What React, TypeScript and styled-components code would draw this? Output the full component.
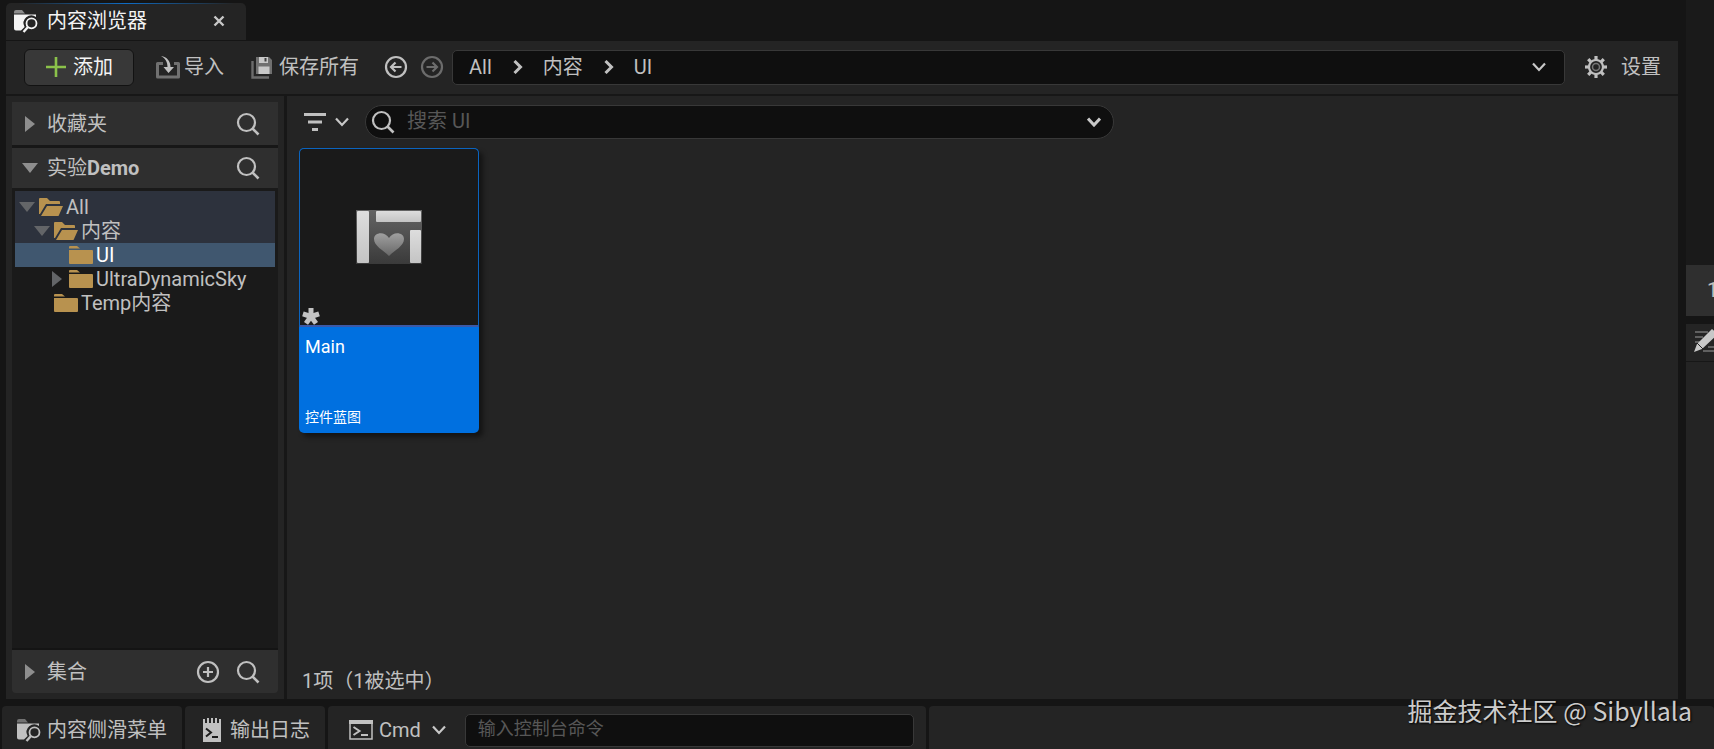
import React from "react";
import styled, { createGlobalStyle } from "styled-components";

const GlobalStyle = createGlobalStyle`
  *, *::before, *::after { box-sizing: border-box; }
  html, body { margin: 0; padding: 0; background: #151515; }
  body, button, input {
    font-family: Roboto, "Noto Sans CJK SC", sans-serif;
    font-size: 20px;
    line-height: 24px;
    color: #c0c0c0;
  }
  button { margin: 0; padding: 0; border: 0; background: none; cursor: pointer; text-align: left; }
  ul { list-style: none; margin: 0; padding: 0; }
  svg { display: block; flex: none; }
`;

const Editor = styled.div`
  display: flex;
  flex-direction: column;
  min-height: 100vh;
`;

const Workspace = styled.div`
  flex: 1;
  display: flex;
  gap: 8px;
  padding-left: 6px;
`;

const Browser = styled.main`
  flex: 1;
  min-width: 0;
  display: flex;
  flex-direction: column;
`;

const TabStrip = styled.header`
  display: flex;
  height: 41px;
  padding: 3px 0 1px;
`;

const Tab = styled.div`
  position: relative;
  display: flex;
  align-items: center;
  width: 240px;
  padding: 0 21px 2px 7px;
  border-radius: 5px 5px 0 0;
  background: #242424;
  color: #f4f4f4;
  overflow: hidden;

  &::before {
    content: "";
    position: absolute;
    top: 0;
    left: 0;
    right: 0;
    height: 1px;
    background: linear-gradient(90deg, transparent 5%, #0f6cc4 50%, transparent 95%);
  }
`;

const TabTitle = styled.h1`
  flex: 1;
  margin: 0 0 0 9px;
  font-size: 20px;
  line-height: 24px;
  font-weight: 400;
`;

const IconButton = styled.button`
  display: flex;
  align-items: center;
  justify-content: center;
  flex: none;
`;

const Toolbar = styled.div`
  display: flex;
  align-items: center;
  height: 53px;
  padding: 0 17px 1px 18px;
  background: #242424;
`;

const AddButton = styled.button`
  display: flex;
  align-items: center;
  gap: 7px;
  height: 37px;
  width: 110px;
  padding: 0 0 1px 21px;
  border: 1px solid #121212;
  border-radius: 6px;
  background: #383838;
  color: #f4f4f4;
`;

const ToolButton = styled.button<{ $gap: number; $before: number }>`
  display: flex;
  align-items: center;
  flex: none;
  gap: ${(p) => p.$gap}px;
  margin-left: ${(p) => p.$before}px;
`;

const History = styled.div`
  display: flex;
  gap: 12px;
  margin: 0 8px 0 25px;
`;

const Breadcrumbs = styled.nav`
  flex: 1;
  display: flex;
  align-items: center;
  height: 35px;
  padding: 0 18px 0 16px;
  border: 1px solid #383838;
  border-radius: 5px;
  background: #0f0f0f;
`;

const Crumb = styled.button`
  padding-right: 21px;
  & + svg { margin-right: 20px; }
`;

const Spacer = styled.div`
  flex: 1;
`;

const Columns = styled.div`
  flex: 1;
  display: flex;
  gap: 3px;
  padding-top: 2px;
  background: #171717;
`;

const Sidebar = styled.aside`
  display: flex;
  flex-direction: column;
  flex: none;
  width: 278px;
  padding: 6px;
  background: #242424;
`;

const SectionHeader = styled.div<{ $height: number; $bottom?: boolean }>`
  display: flex;
  align-items: center;
  height: ${(p) => p.$height}px;
  padding: 0 18px 0 10px;
  border-radius: ${(p) => (p.$bottom ? "0 0 4px 4px" : "0")};
  background: #2f2f2f;
`;

const SectionToggle = styled.button`
  flex: 1;
  display: flex;
  align-items: center;
  & > svg { margin-right: 9px; }
`;

const SectionActions = styled.div`
  display: flex;
  gap: 16px;
`;

const Divider = styled.div`
  height: 3px;
  background: #171717;
`;

const TreeArea = styled.div`
  flex: 1;
  padding: 3px;
  border-bottom: 2px solid #141414;
  background: #1a1a1a;
`;

const Ancestors = styled.ul`
  padding-top: 4px;
  background: #2d323d;
`;

const TreeRow = styled.button<{ $level: number; $selected?: boolean }>`
  display: flex;
  align-items: center;
  width: 100%;
  height: 24px;
  padding-left: ${(p) => 4 + p.$level * 15}px;
  background: ${(p) => (p.$selected ? "#40576f" : "transparent")};
  color: ${(p) => (p.$selected ? "#ffffff" : "#c0c0c0")};
  white-space: nowrap;
`;

const TreeArrow = styled.span`
  display: flex;
  justify-content: center;
  width: 16px;
  margin-right: 4px;
`;

const TreeLabel = styled.span`
  margin-left: 3px;
`;

const Content = styled.section`
  flex: 1;
  display: flex;
  flex-direction: column;
  min-width: 0;
  padding: 9px 12px 6px;
  background: #242424;
`;

const FilterBar = styled.div`
  display: flex;
  align-items: center;
  padding-left: 5px;
`;

const FilterButton = styled.button`
  display: flex;
  align-items: center;
  gap: 9px;
  margin-right: 16px;
`;

const SearchBox = styled.label`
  display: flex;
  align-items: center;
  flex: 0 1 749px;
  height: 34px;
  padding: 0 12px 0 5px;
  border: 1px solid #383838;
  border-radius: 17px;
  background: #0f0f0f;
`;

const TextField = styled.input`
  flex: 1;
  min-width: 0;
  padding: 0;
  border: 0;
  outline: 0;
  background: transparent;
  &::placeholder { color: #575757; opacity: 1; }
`;

const SearchField = styled(TextField)`
  padding: 0 0 3px 12px;
`;

const Assets = styled.div`
  flex: 1;
  display: flex;
  align-items: flex-start;
  padding-top: 9px;
`;

const AssetCard = styled.button`
  display: flex;
  flex-direction: column;
  width: 180px;
  border-radius: 5px;
  background: #0070e0;
  color: #ffffff;
  overflow: hidden;
  box-shadow: 4px 4px 5px rgba(0, 0, 0, 0.45);
`;

const Thumbnail = styled.span`
  position: relative;
  display: flex;
  align-items: center;
  justify-content: center;
  width: 100%;
  height: 179px;
  border: 1px solid #0b64bf;
  border-bottom: 2px solid #3b59a8;
  border-radius: 5px 5px 0 0;
  background: #1a1a1a;
`;

const UnsavedMark = styled.span`
  position: absolute;
  left: 2px;
  bottom: 0;
`;

const AssetText = styled.span`
  display: flex;
  flex-direction: column;
  justify-content: space-between;
  height: 106px;
  padding: 8px 6px 6px;
  font-size: 18px;
`;

const AssetType = styled.span`
  font-size: 14px;
  line-height: 20px;
`;

const Summary = styled.p`
  margin: 0;
  padding-left: 3px;
`;

const SidePeek = styled.aside`
  flex: none;
  display: flex;
  flex-direction: column;
  width: 28px;
  overflow: hidden;
`;

const PeekTop = styled.div`
  height: 265px;
  background: #1a1a1a;
`;

const PeekTab = styled.div`
  height: 51px;
  margin-bottom: 8px;
  padding: 13px 0 0 21px;
  background: #2f2f2f;
`;

const PeekTools = styled.div`
  height: 38px;
  padding: 5px 0 0 8px;
  border-bottom: 1px solid #171717;
  background: #242424;
`;

const PeekBody = styled.div`
  flex: 1;
  background: #242424;
`;

const StatusBar = styled.footer`
  display: flex;
  height: 50px;
  gap: 3px;
  padding: 7px 0 0 2px;
  background: #151515;
`;

const StatusGroup = styled.div<{ $width?: number; $pad: number }>`
  display: flex;
  align-items: center;
  flex: ${(p) => (p.$width ? `none` : "1")};
  width: ${(p) => (p.$width ? `${p.$width}px` : "auto")};
  padding: 5px 0 0 ${(p) => p.$pad}px;
  border-radius: 4px 4px 0 0;
  background: #242424;
`;

const StatusButton = styled.button<{ $gap: number }>`
  display: flex;
  align-items: center;
  gap: ${(p) => p.$gap}px;
  white-space: nowrap;
`;

const ConsoleField = styled(TextField)`
  flex: none;
  width: 449px;
  height: 33px;
  margin-left: 19px;
  padding: 0 12px 3px;
  border: 1px solid #383838;
  border-radius: 5px;
  background: #0f0f0f;
  font-size: 18px;
`;

const Watermark = styled.div`
  position: absolute;
  right: 22px;
  bottom: 21px;
  font-family: "Noto Sans CJK SC", sans-serif;
  font-size: 25px;
  line-height: 36px;
  color: #cccccc;
  text-shadow: 1px 1px 2px #000000;
`;

const BrowserIcon = () => (
  <svg width="25" height="24" viewBox="0 0 25 24" fill="none">
    <path d="M1 3a2 2 0 0 1 2-2h6l3 3.500H1z" fill="currentColor" opacity=".5" />
    <path d="M1 5.500h22v2.400A7.800 7.800 0 0 0 11.600 18L8 21.500H3a2 2 0 0 1-2-2z" fill="currentColor" />
    <circle cx="18.500" cy="14.300" r="5" stroke="currentColor" strokeWidth="1.800" />
    <path d="M15 18l-4.500 5" stroke="currentColor" strokeWidth="2.400" />
  </svg>
);

const CloseIcon = () => (
  <svg width="12" height="12" viewBox="0 0 12 12" fill="none">
    <path d="M1.500 1.500l9 9M10.500 1.500l-9 9" stroke="#c8c8c8" strokeWidth="2.400" />
  </svg>
);

const PlusIcon = () => (
  <svg width="20" height="20" viewBox="0 0 20 20" fill="none">
    <path d="M10 0v20M0 10h20" stroke="#8bc24a" strokeWidth="2.600" />
  </svg>
);

const ImportIcon = () => (
  <svg width="24" height="24" viewBox="0 0 24 24" fill="none">
    <path d="M7 8.500H1.500v13.500h21V8.500H18" stroke="#707070" strokeWidth="3" strokeLinejoin="round" />
    <path d="M5 1c6 1 9.500 5 9.500 11H18l-5.500 6L7.500 12h4C11.500 7 9.500 3.500 5 1z" fill="#c0c0c0" />
  </svg>
);

const SaveIcon = () => (
  <svg width="22" height="23" viewBox="0 0 22 23" fill="none">
    <path d="M1.500 5v16.500H18" stroke="#6c6c6c" strokeWidth="2.400" />
    <path d="M5 1h13l3 3v14H5z" fill="#707070" />
    <path d="M8 1h9v6H8zM7.500 10.500h11V18h-11z" fill="#c8c8c8" />
    <path d="M13.500 2h2v3.500h-2z" fill="#404040" />
  </svg>
);

const HistoryIcon = ({ forward }: { forward?: boolean }) => (
  <svg width="24" height="24" viewBox="0 0 24 24" fill="none" stroke={forward ? "#6c6c6c" : "#c0c0c0"} strokeWidth="2.200">
    <circle cx="12" cy="12" r="10" />
    {forward ? <path d="M6.500 12h10M12.500 7.500L17 12l-4.500 4.500" /> : <path d="M17.500 12h-10M11.500 7.500L7 12l4.500 4.500" />}
  </svg>
);

const CrumbChevron = () => (
  <svg width="10" height="14" viewBox="0 0 10 14" fill="none">
    <path d="M1.500 1l6 6-6 6" stroke="#c0c0c0" strokeWidth="3" />
  </svg>
);

const DownIcon = ({ bold }: { bold?: boolean }) => (
  <svg width="14" height="10" viewBox="0 0 14 10" fill="none">
    <path d="M1 1.500l6 6.500 6-6.500" stroke="#c8c8c8" strokeWidth={bold ? 3 : 2.2} />
  </svg>
);

const GearIcon = () => (
  <svg width="24" height="24" viewBox="0 0 24 24" fill="none" stroke="#c0c0c0">
    {[0, 45, 90, 135, 180, 225, 270, 315].map((angle) => (
      <path key={angle} d="M12 1v4" strokeWidth="3.200" transform={`rotate(${angle} 12 12)`} />
    ))}
    <circle cx="12" cy="12" r="7" strokeWidth="2.200" />
    <circle cx="12" cy="12" r="3.500" stroke="#777777" strokeWidth="1.500" />
  </svg>
);

const SearchIcon = () => (
  <svg width="24" height="24" viewBox="0 0 24 24" fill="none" stroke="#c0c0c0" strokeWidth="2.200">
    <circle cx="10.500" cy="10.500" r="8.500" />
    <path d="M16.500 16.500l6 6" strokeWidth="2.600" />
  </svg>
);

const AddCircleIcon = () => (
  <svg width="24" height="24" viewBox="0 0 24 24" fill="none" stroke="#c0c0c0" strokeWidth="2.200">
    <circle cx="12" cy="12" r="10" />
    <path d="M12 7v10M7 12h10" />
  </svg>
);

const ArrowIcon = ({ open, color = "#8e8e8e" }: { open?: boolean; color?: string }) =>
  open ? (
    <svg width="16" height="10" viewBox="0 0 16 10"><path d="M0 0h16L8 10z" fill={color} /></svg>
  ) : (
    <svg width="16" height="16" viewBox="0 0 16 16"><path d="M3 0v16l10-8z" fill={color} /></svg>
  );

const FolderIcon = ({ open }: { open?: boolean }) => (
  <svg width="24" height="20" viewBox="0 0 24 20" fill="#b8924f">
    {open ? (
      <>
        <path d="M0 2a1 1 0 0 1 1-1h7l3 3h9a1 1 0 0 1 1 1v2H7L1 17H0z" />
        <path d="M8 9h16l-4 9a1 1 0 0 1-1 1H2z" />
      </>
    ) : (
      <>
        <path d="M0 2a1 1 0 0 1 1-1h7l3 2.500H0z" />
        <path d="M0 5h23a1 1 0 0 1 1 1v12a1 1 0 0 1-1 1H1a1 1 0 0 1-1-1z" />
      </>
    )}
  </svg>
);

const FilterIcon = () => (
  <svg width="22" height="18" viewBox="0 0 22 18" stroke="#c0c0c0" strokeWidth="3">
    <path d="M0 1.500h22M4 9h14M8 16.500h6" />
  </svg>
);

const WidgetIcon = () => (
  <svg width="66" height="54" viewBox="0 0 66 54">
    <defs>
      <linearGradient id="heart" x1="0" y1="0" x2="0" y2="1">
        <stop offset="0" stopColor="#a0a0a0" />
        <stop offset="1" stopColor="#686868" />
      </linearGradient>
      <linearGradient id="board" x1="0" y1="0" x2="0" y2="1">
        <stop offset="0" stopColor="#646464" />
        <stop offset="1" stopColor="#3a3a3a" />
      </linearGradient>
      <linearGradient id="panel" x1="0" y1="0" x2="0" y2="1">
        <stop offset="0" stopColor="#dddddd" />
        <stop offset="1" stopColor="#c4c4c4" />
      </linearGradient>
    </defs>
    <rect width="66" height="54" fill="url(#board)" />
    <g fill="url(#panel)">
      <rect x="1" y="1" width="12" height="52" rx="1" />
      <rect x="20" y="1" width="45" height="11" rx="1" />
      <rect x="54" y="20" width="11" height="33" rx="1" />
    </g>
    <path d="M33 46C27 40 18 36 18 29c0-7 11-8 15-1 4-7 15-6 15 1 0 7-9 11-15 17z" fill="url(#heart)" />
  </svg>
);

const AsteriskIcon = () => (
  <svg width="18" height="18" viewBox="0 0 18 18" stroke="#c4c4c4" strokeWidth="5" strokeLinejoin="round">
    {[0, 72, 144, 216, 288].map((angle) => (
      <path key={angle} d="M9 9.500V1" transform={`rotate(${angle} 9 9.500)`} />
    ))}
  </svg>
);

const LogIcon = () => (
  <svg width="18" height="24" viewBox="0 0 18 24" fill="none">
    <path d="M0 1h2v4h2V0h2v5h2V0h2v5h2V0h2v5h2V1h2v23H0z" fill="#c0c0c0" />
    <path d="M3 10.500l5 4-5 4M9 19h6" stroke="#1c1c1c" strokeWidth="2" />
  </svg>
);

const TerminalIcon = () => (
  <svg width="24" height="20" viewBox="0 0 24 20" fill="none" stroke="#c0c0c0">
    <path d="M1 2v17h22V2" strokeWidth="1.500" />
    <path d="M0 2h24" strokeWidth="4" />
    <path d="M4.500 7l6 4-6 4M12 15h7" strokeWidth="2" />
  </svg>
);

const PencilIcon = () => (
  <svg width="28" height="24" viewBox="0 0 28 24">
    <path d="M1 3h13M1 8h8M14 18h14M9 22h19M1 13h6" stroke="#606060" strokeWidth="2" />
    <path d="M0 23l3-8L18 0l6 5L8 20z" fill="#c8c8c8" />
    <path d="M3 14l6 6" stroke="#242424" strokeWidth="1" />
  </svg>
);

type Folder = { name: string; level: number; open?: boolean; closed?: boolean; selected?: boolean };

const ancestors: Folder[] = [
  { name: "All", level: 0, open: true },
  { name: "内容", level: 1, open: true },
];

const folders: Folder[] = [
  { name: "UI", level: 2, selected: true },
  { name: "UltraDynamicSky", level: 2, closed: true },
  { name: "Temp内容", level: 1 },
];

const FolderRow = ({ name, level, open, closed, selected }: Folder) => (
  <li>
    <TreeRow $level={level} $selected={selected} aria-current={selected}>
      <TreeArrow>{(open || closed) && <ArrowIcon open={open} color="#636568" />}</TreeArrow>
      <FolderIcon open={open} />
      <TreeLabel>{name}</TreeLabel>
    </TreeRow>
  </li>
);

export default function App() {
  return (
    <Editor>
      <GlobalStyle />
      <Workspace>
        <Browser>
          <TabStrip>
            <Tab>
              <BrowserIcon />
              <TabTitle>内容浏览器</TabTitle>
              <IconButton aria-label="关闭"><CloseIcon /></IconButton>
            </Tab>
          </TabStrip>
          <Toolbar>
            <AddButton><PlusIcon />添加</AddButton>
            <ToolButton $gap={4} $before={22}><ImportIcon />导入</ToolButton>
            <ToolButton $gap={6} $before={27}><SaveIcon />保存所有</ToolButton>
            <History>
              <IconButton aria-label="后退"><HistoryIcon /></IconButton>
              <IconButton aria-label="前进"><HistoryIcon forward /></IconButton>
            </History>
            <Breadcrumbs aria-label="路径">
              <Crumb>All</Crumb><CrumbChevron />
              <Crumb>内容</Crumb><CrumbChevron />
              <Crumb>UI</Crumb>
              <Spacer />
              <IconButton aria-label="路径列表"><DownIcon /></IconButton>
            </Breadcrumbs>
            <ToolButton $gap={13} $before={19}><GearIcon />设置</ToolButton>
          </Toolbar>
          <Columns>
            <Sidebar>
              <SectionHeader $height={43}>
                <SectionToggle><ArrowIcon />收藏夹</SectionToggle>
                <IconButton aria-label="搜索收藏夹"><SearchIcon /></IconButton>
              </SectionHeader>
              <Divider />
              <SectionHeader $height={40}>
                <SectionToggle><ArrowIcon open />实验<b>Demo</b></SectionToggle>
                <IconButton aria-label="搜索文件夹"><SearchIcon /></IconButton>
              </SectionHeader>
              <TreeArea>
                <Ancestors>{ancestors.map((f) => <FolderRow key={f.name} {...f} />)}</Ancestors>
                <ul>{folders.map((f) => <FolderRow key={f.name} {...f} />)}</ul>
              </TreeArea>
              <SectionHeader $height={43} $bottom>
                <SectionToggle><ArrowIcon />集合</SectionToggle>
                <SectionActions>
                  <IconButton aria-label="添加集合"><AddCircleIcon /></IconButton>
                  <IconButton aria-label="搜索集合"><SearchIcon /></IconButton>
                </SectionActions>
              </SectionHeader>
            </Sidebar>
            <Content>
              <FilterBar>
                <FilterButton aria-label="筛选"><FilterIcon /><DownIcon /></FilterButton>
                <SearchBox>
                  <SearchIcon />
                  <SearchField type="text" placeholder="搜索 UI" aria-label="搜索 UI" />
                  <DownIcon bold />
                </SearchBox>
              </FilterBar>
              <Assets>
                <AssetCard>
                  <Thumbnail>
                    <WidgetIcon />
                    <UnsavedMark><AsteriskIcon /></UnsavedMark>
                  </Thumbnail>
                  <AssetText>
                    Main
                    <AssetType>控件蓝图</AssetType>
                  </AssetText>
                </AssetCard>
              </Assets>
              <Summary>1项（1被选中）</Summary>
            </Content>
          </Columns>
        </Browser>
        <SidePeek>
          <PeekTop />
          <PeekTab>1</PeekTab>
          <PeekTools><PencilIcon /></PeekTools>
          <PeekBody />
        </SidePeek>
      </Workspace>
      <StatusBar>
        <StatusGroup $width={180} $pad={14}>
          <StatusButton $gap={6}><BrowserIcon />内容侧滑菜单</StatusButton>
        </StatusGroup>
        <StatusGroup $width={140} $pad={18}>
          <StatusButton $gap={9}><LogIcon />输出日志</StatusButton>
        </StatusGroup>
        <StatusGroup $width={598} $pad={21}>
          <StatusButton $gap={6}><TerminalIcon />Cmd</StatusButton>
          <ToolButton $gap={0} $before={11} aria-label="命令类型"><DownIcon /></ToolButton>
          <ConsoleField type="text" placeholder="输入控制台命令" aria-label="输入控制台命令" />
        </StatusGroup>
        <StatusGroup $pad={0} />
      </StatusBar>
      <Watermark>掘金技术社区 @ Sibyllala</Watermark>
    </Editor>
  );
}
